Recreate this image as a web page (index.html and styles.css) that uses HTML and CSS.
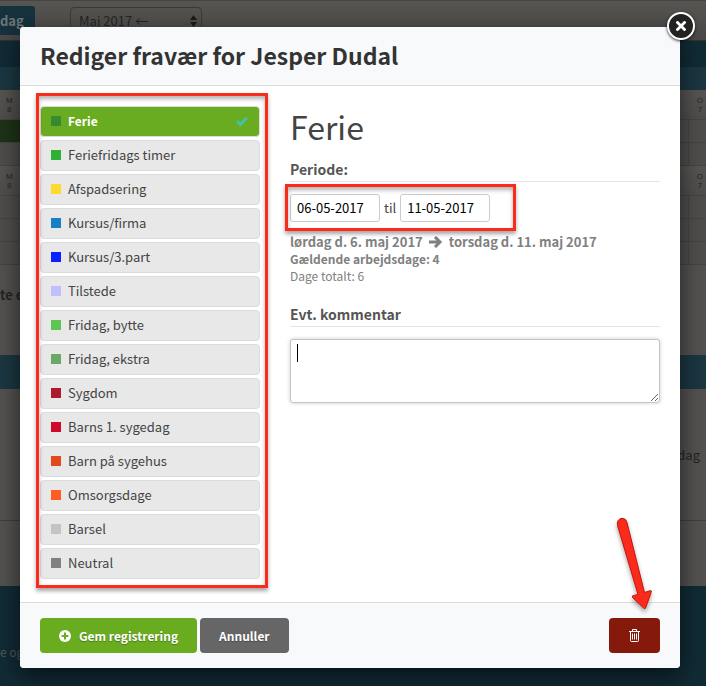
FILE: index.html
```html
<!DOCTYPE html>
<html lang="da">
<head>
    <meta charset="UTF-8">
    <meta name="viewport" content="width=device-width, initial-scale=1.0">
    <title>Rediger fravær</title>
    <link rel="stylesheet" href="styles.css">
</head>
<body>
    <div class="calendar">
        <div class="toolbar">
            <button type="button" class="today">dag</button>
            <select class="month" aria-label="Måned">
                <option>Maj 2017 ←</option>
            </select>
            <svg class="month-arrows" width="7" height="12" viewBox="0 0 7 12"><path d="M3.5 0 7 5H0zM3.5 12 0 7h7z" fill="#1c1b1a"/></svg>
        </div>
        <div class="bar-dark"></div>
        <div class="bar-light"></div>
        <div class="days"><span>M<br>8</span><span>O<br>7</span></div>
        <div class="week-row"><div class="booked"></div></div>
        <div class="week-row"></div>
        <div class="days"><span>M<br>8</span><span>O<br>7</span></div>
        <div class="week-row"></div>
        <div class="week-row"></div>
        <div class="week-row"></div>
        <div class="section-title">te e</div>
        <div class="bar-middle"></div>
        <div class="section-text">dag</div>
        <div class="section-empty"></div>
        <div class="page-footer">e og</div>
    </div>

    <div class="overlay">
        <div class="dialog" role="dialog" aria-labelledby="dialog-title">
            <button type="button" class="close" aria-label="Luk">
                <svg width="10" height="10" viewBox="0 0 10 10"><path d="M1.5 1.5l7 7M8.5 1.5l-7 7" stroke="#fff" stroke-width="2.8" stroke-linecap="square"/></svg>
            </button>

            <div class="dialog-header">
                <h1 id="dialog-title">Rediger fravær for Jesper Dudal</h1>
            </div>

            <div class="dialog-body">
                <div class="types highlight">
                    <button type="button" class="type selected">
                        <span class="swatch ferie"></span>Ferie
                        <svg class="check" width="14" height="12" viewBox="0 0 14 12"><path d="M2 6l3.4 3.6L12 2.4" fill="none" stroke="#43c1a4" stroke-width="3"/></svg>
                    </button>
                    <button type="button" class="type"><span class="swatch feriefridag"></span>Feriefridags timer</button>
                    <button type="button" class="type"><span class="swatch afspadsering"></span>Afspadsering</button>
                    <button type="button" class="type"><span class="swatch kursus-firma"></span>Kursus/firma</button>
                    <button type="button" class="type"><span class="swatch kursus-part"></span>Kursus/3.part</button>
                    <button type="button" class="type"><span class="swatch tilstede"></span>Tilstede</button>
                    <button type="button" class="type"><span class="swatch fridag-bytte"></span>Fridag, bytte</button>
                    <button type="button" class="type"><span class="swatch fridag-ekstra"></span>Fridag, ekstra</button>
                    <button type="button" class="type"><span class="swatch sygdom"></span>Sygdom</button>
                    <button type="button" class="type"><span class="swatch barns-sygedag"></span>Barns 1. sygedag</button>
                    <button type="button" class="type"><span class="swatch barn-sygehus"></span>Barn på sygehus</button>
                    <button type="button" class="type"><span class="swatch omsorgsdage"></span>Omsorgsdage</button>
                    <button type="button" class="type"><span class="swatch barsel"></span>Barsel</button>
                    <button type="button" class="type"><span class="swatch neutral"></span>Neutral</button>
                </div>

                <form class="details">
                    <h2>Ferie</h2>
                    <label class="field-title" for="date-from">Periode:</label>
                    <div class="period highlight">
                        <input type="text" id="date-from" value="06-05-2017">
                        <label for="date-to">til</label>
                        <input type="text" id="date-to" value="11-05-2017">
                    </div>
                    <div class="summary">
                        <p class="range">
                            lørdag d. 6. maj 2017
                            <svg width="14" height="12" viewBox="0 0 14 12"><path d="M0 6h11M6 1l5 5-5 5" fill="none" stroke="#808080" stroke-width="3"/></svg>
                            torsdag d. 11. maj 2017
                        </p>
                        <p class="workdays">Gældende arbejdsdage: 4</p>
                        <p>Dage totalt: 6</p>
                    </div>
                    <label class="field-title" for="comment">Evt. kommentar</label>
                    <div class="comment">
                        <textarea id="comment"></textarea>
                        <span class="caret"></span>
                    </div>
                </form>
            </div>

            <div class="dialog-footer">
                <button type="button" class="btn save">
                    <svg width="12" height="12" viewBox="0 0 12 12"><circle cx="6" cy="6" r="6" fill="#fff"/><path d="M6 2.6v6.8M2.6 6h6.8" stroke="#6aac1f" stroke-width="2"/></svg>
                    Gem registrering
                </button>
                <button type="button" class="btn cancel">Annuller</button>
                <div class="delete-wrap">
                    <button type="button" class="btn delete" aria-label="Slet">
                        <svg width="13" height="13" viewBox="0 0 13 13" fill="none" stroke="#fff"><path d="M1 2.5h11M4.500 2.5v-2h4v2M2.500 2.5v9q0 1 1 1h6q1 0 1-1v-9M4.500 4.5v6M6.500 4.5v6M8.500 4.5v6"/></svg>
                    </button>
                    <svg class="arrow" width="44" height="100" viewBox="0 0 44 100"><path d="M9.5 10.5Q8.5 5 13 3.5Q17.5 2.5 19 7.5L36.5 77.5L42.5 75.5Q44 75.5 43.2 77.5L37.5 93Q37 94.5 35.7 93L24.5 82.5Q23.5 80.5 25.5 80.5L30 79.5Z" fill="#fb2b1c" stroke="#c4160d"/></svg>
                </div>
            </div>
        </div>
    </div>
</body>
</html>
```

FILE: styles.css
```css
* {
    box-sizing: border-box;
}

body {
    margin: 0;
    background-color: #112b35;
    color: #444;
    font-family: "Noto Sans CJK SC", "Noto Sans", sans-serif;
    font-size: 13px;
    line-height: 17px;
}

button, input, select, textarea {
    font-family: inherit;
    font-size: inherit;
    line-height: inherit;
    margin: 0;
}

h1, h2, p {
    margin: 0;
}

/* Dimmed calendar behind the dialog */
.calendar {
    background-color: #545250;
    color: #262423;
    overflow: hidden;
}

.toolbar {
    display: flex;
    align-items: flex-start;
    height: 41px;
    padding-top: 5px;
    background: linear-gradient(#575552, #4b4947);
    border-top: 1px solid #474543;
    border-bottom: 1px solid #33312f;
}

.today {
    width: 35px;
    height: 29px;
    padding: 0;
    border: none;
    border-radius: 0 3px 3px 0;
    background-color: #16323d;
    color: #6e7779;
    font-weight: bold;
    text-align: left;
}

.month {
    width: 132px;
    height: 29px;
    margin: 1px 0 0 35px;
    padding: 0 8px 2px;
    border: 1px solid #3c3a38;
    border-radius: 4px;
    background-color: transparent;
    color: #262423;
    appearance: none;
}

.month-arrows {
    margin: 9px 0 0 -12px;
}

.bar-dark {
    height: 26px;
    background-color: #112b35;
}

.bar-light {
    height: 23px;
    background-color: #1b3742;
}

.days {
    display: flex;
    justify-content: space-between;
    height: 30px;
    padding: 6px 3px 0 6px;
    border-bottom: 1px solid #474543;
    background: linear-gradient(#575552, #504e4c);
    font-family: "Liberation Sans", sans-serif;
    font-size: 8px;
    line-height: 9px;
    text-align: center;
}

.week-row {
    height: 23px;
    border-bottom: 1px solid #464442;
    background: linear-gradient(to left, transparent 17px, #464442 17px, #464442 18px, transparent 18px), #504e4c;
}

.booked {
    width: 24px;
    height: 22px;
    background-color: #1d3417;
}

.section-title {
    height: 90px;
    padding-top: 21px;
    font-weight: bold;
}

.bar-middle {
    height: 34px;
    background-color: #1b3742;
}

.section-text {
    height: 132px;
    padding: 57px 6px 0 0;
    border-bottom: 1px solid #403e3d;
    text-align: right;
}

.section-empty {
    height: 65px;
}

.page-footer {
    min-height: 100px;
    padding-top: 57px;
    background-color: #112b35;
    color: #4f5a5d;
    font-size: 12px;
}

/* Dialog */
.overlay {
    position: absolute;
    top: 0;
    left: 0;
    right: 0;
    padding: 27px 26px 18px 20px;
}

.dialog {
    position: relative;
    border-radius: 4px;
    background-color: #fff;
    box-shadow: 0 8px 24px rgba(0, 0, 0, 0.6);
}

.close {
    position: absolute;
    top: -15px;
    right: -15px;
    display: flex;
    align-items: center;
    justify-content: center;
    width: 28px;
    height: 28px;
    padding: 0;
    border: 2px solid #fff;
    border-radius: 50%;
    background-color: #222;
    box-shadow: 0 1px 3px rgba(0, 0, 0, 0.8);
}

.dialog-header {
    padding: 13px 20px 15px;
    border-bottom: 1px solid #d9dcde;
    border-radius: 4px 4px 0 0;
    background-color: #f7f9fb;
}

.dialog-header h1 {
    color: #333;
    font-size: 23px;
    line-height: 30px;
}

.dialog-body {
    display: flex;
    gap: 30px;
    padding: 20px 20px 23px;
}

/* Red marker frames */
.highlight {
    position: relative;
}

.highlight::after {
    content: "";
    position: absolute;
    border: 3px solid #fb2b1c;
    box-shadow: 0 3px 4px rgba(0, 0, 0, 0.35), inset 0 3px 4px rgba(0, 0, 0, 0.3);
    pointer-events: none;
}

.types::after {
    top: -13px;
    right: -8px;
    bottom: -9px;
    left: -4px;
}

.period::after {
    top: -10px;
    bottom: -9px;
    left: -5px;
    width: 225px;
}

.types {
    display: flex;
    flex-direction: column;
    gap: 3px;
    width: 220px;
    flex-shrink: 0;
}

.type {
    display: flex;
    align-items: center;
    height: 31px;
    padding: 0 10px 2px;
    border: 1px solid #dcdcdc;
    border-radius: 4px;
    background-color: #e8e8e8;
    color: #444;
    cursor: pointer;
}

.type.selected {
    background-color: #6aac1f;
    color: #fff;
    font-size: 12px;
    font-weight: bold;
}

.check {
    margin-left: auto;
}

.swatch {
    width: 10px;
    height: 10px;
    margin-right: 7px;
}

.ferie { background-color: #388a32; }
.feriefridag { background-color: #2fb135; }
.afspadsering { background-color: #ffd92f; }
.kursus-firma { background-color: #1580c3; }
.kursus-part { background-color: #0a20ff; }
.tilstede { background-color: #c0c0ff; }
.fridag-bytte { background-color: #5ec454; }
.fridag-ekstra { background-color: #6ba968; }
.sygdom { background-color: #ab1a30; }
.barns-sygedag { background-color: #d00a2c; }
.barn-sygehus { background-color: #e14a1a; }
.omsorgsdage { background-color: #ff5c21; }
.barsel { background-color: #c4c4c4; }
.neutral { background-color: #808080; }

.details {
    flex: 1;
    min-width: 0;
}

.details h2 {
    margin-bottom: 15px;
    font-size: 32px;
    font-weight: normal;
    line-height: 40px;
}

.field-title {
    display: block;
    padding-bottom: 3px;
    border-bottom: 1px solid #e5e5e5;
    color: #555;
    font-size: 14px;
    font-weight: bold;
}

.period {
    display: flex;
    align-items: center;
    gap: 4px;
    margin: 12px 0 11px;
}

.period input {
    width: 90px;
    height: 28px;
    padding: 0 6px 2px;
    border: 1px solid #ccc;
    border-radius: 3px;
    color: #000;
}

.period label {
    padding-bottom: 2px;
}

.summary {
    margin-bottom: 22px;
    color: #808080;
    font-size: 12px;
}

.range {
    display: flex;
    align-items: center;
    gap: 6px;
    font-size: 13px;
    font-weight: bold;
}

.workdays {
    font-weight: bold;
}

.comment {
    position: relative;
    margin-top: 12px;
}

.comment textarea {
    display: block;
    width: 100%;
    height: 64px;
    padding: 4px 6px;
    border: 1px solid #c4c4c4;
    border-radius: 3px;
    outline: none;
    box-shadow: 0 0 4px rgba(0, 0, 0, 0.2);
}

.caret {
    position: absolute;
    top: 5px;
    left: 7px;
    width: 1px;
    height: 18px;
    background-color: #000;
}

.dialog-footer {
    display: flex;
    gap: 3px;
    padding: 15px 20px;
    border-top: 1px solid #d9dcde;
    border-radius: 0 0 4px 4px;
    background-color: #f7f9fb;
}

.btn {
    display: flex;
    align-items: center;
    justify-content: center;
    gap: 8px;
    height: 35px;
    padding: 0 19px;
    border: none;
    border-radius: 4px;
    color: #fff;
    font-size: 12px;
    font-weight: bold;
    text-shadow: 0 1px 1px rgba(0, 0, 0, 0.3);
    cursor: pointer;
}

.save {
    background-color: #6aac1f;
}

.cancel {
    background-color: #666;
}

.delete {
    background-color: #85190b;
}

.delete-wrap {
    position: relative;
    margin-left: auto;
}

/* Arrow pointing at the delete button */
.arrow {
    position: absolute;
    right: 8px;
    bottom: 38px;
    filter: drop-shadow(0 3px 2px rgba(0, 0, 0, 0.35));
    pointer-events: none;
}
```
